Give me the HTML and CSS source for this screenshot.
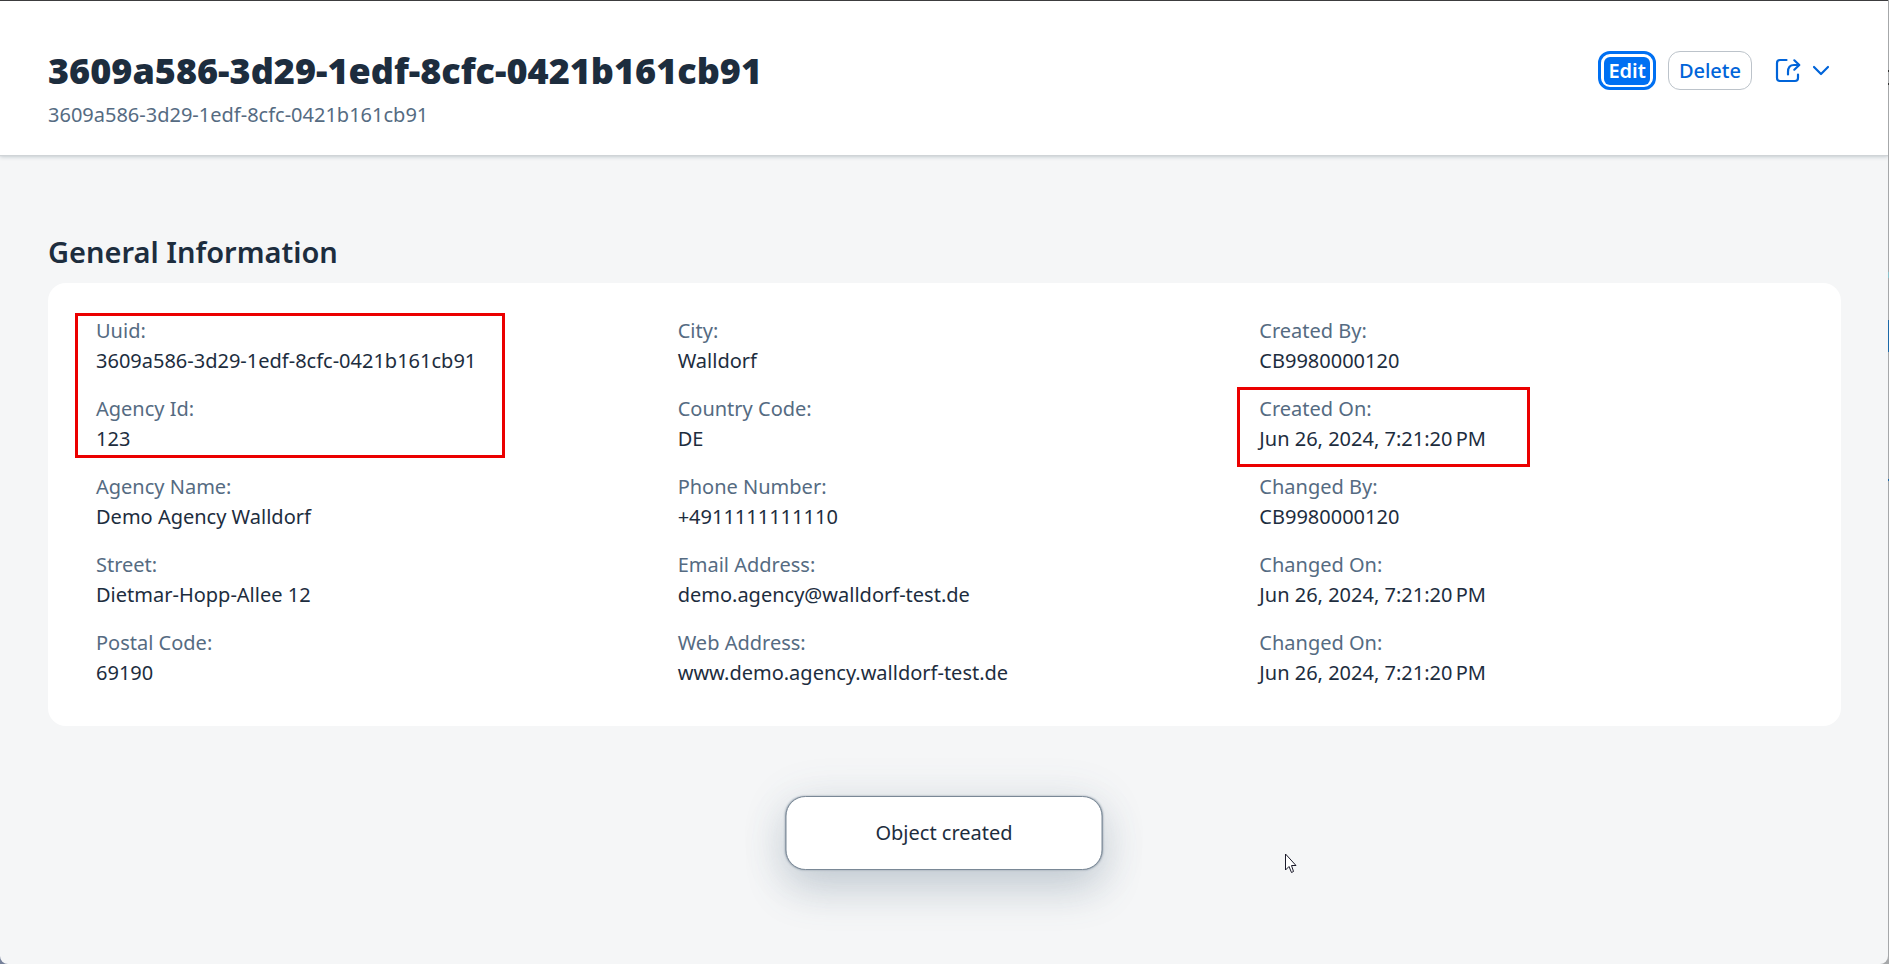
FILE: index.html
```html
<!DOCTYPE html>
<html lang="en">
<head>
<meta charset="utf-8">
<title>Agency</title>
<link rel="stylesheet" href="styles.css">
</head>
<body>
<div class="window">
  <header class="header">
    <div class="heading">
      <h1 class="title">3609a586-3d29-1edf-8cfc-0421b161cb91</h1>
      <p class="subtitle">3609a586-3d29-1edf-8cfc-0421b161cb91</p>
    </div>
    <div class="actions">
      <button class="button button-edit" type="button"><span>Edit</span></button>
      <button class="button button-delete" type="button">Delete</button>
      <button class="button button-share" type="button" aria-label="Share">
        <svg width="26" height="26" viewBox="0 0 26 26" fill="none" stroke="currentColor" stroke-width="2.200" stroke-linecap="round" stroke-linejoin="round"><path d="M11.500 2H5Q2 2 2 5V20Q2 23 5 23H20Q23 23 23 20V16.500"/><path d="M13 16.500V14Q13 7 19 7H24"/><path d="M19.300 2.300L24.300 7L19.300 11.700"/></svg>
        <svg width="18" height="12" viewBox="0 0 18 12" fill="none" stroke="currentColor" stroke-width="2.200" stroke-linecap="round" stroke-linejoin="round"><path d="M2 2L9 9L16 2"/></svg>
      </button>
    </div>
  </header>
  <main class="content">
    <h2 class="section-title">General Information</h2>
    <section class="card">
      <dl class="column">
        <div class="field"><dt>Uuid:</dt><dd>3609a586-3d29-1edf-8cfc-0421b161cb91</dd><span class="mark mark-id"></span></div>
        <div class="field"><dt>Agency Id:</dt><dd>123</dd></div>
        <div class="field"><dt>Agency Name:</dt><dd>Demo Agency Walldorf</dd></div>
        <div class="field"><dt>Street:</dt><dd>Dietmar-Hopp-Allee 12</dd></div>
        <div class="field"><dt>Postal Code:</dt><dd>69190</dd></div>
      </dl>
      <dl class="column">
        <div class="field"><dt>City:</dt><dd>Walldorf</dd></div>
        <div class="field"><dt>Country Code:</dt><dd>DE</dd></div>
        <div class="field"><dt>Phone Number:</dt><dd>+4911111111110</dd></div>
        <div class="field"><dt>Email Address:</dt><dd>demo.agency@walldorf-test.de</dd></div>
        <div class="field"><dt>Web Address:</dt><dd>www.demo.agency.walldorf-test.de</dd></div>
      </dl>
      <dl class="column">
        <div class="field"><dt>Created By:</dt><dd>CB9980000120</dd></div>
        <div class="field"><dt>Created On:</dt><dd>Jun 26, 2024, 7:21:20&#8239;PM</dd><span class="mark mark-date"></span></div>
        <div class="field"><dt>Changed By:</dt><dd>CB9980000120</dd></div>
        <div class="field"><dt>Changed On:</dt><dd>Jun 26, 2024, 7:21:20&#8239;PM</dd></div>
        <div class="field"><dt>Changed On:</dt><dd>Jun 26, 2024, 7:21:20&#8239;PM</dd></div>
      </dl>
    </section>
  </main>
  <div class="toast" role="status">Object created</div>
  <svg class="cursor" width="13" height="21" viewBox="0 0 13 21"><path d="M1.500 1V17L5 13.500L7.500 19.500L9.500 18.500L7.500 12.500H12Z" fill="#fff" stroke="#1a1a2a" stroke-width="1"/></svg>
</div>
</body>
</html>
```
FILE: styles.css
```css
* { box-sizing: border-box; }

body {
  margin: 0;
  min-height: 100vh;
  display: flex;
  background:
    linear-gradient(#333, #333) right 70px / 1px 2px no-repeat,
    linear-gradient(#333, #333) right 83px / 1px 2px no-repeat,
    linear-gradient(#8cc3cc, #8cc3cc) right 272px / 1px 6px no-repeat,
    linear-gradient(#1c69a8, #1c69a8) right 320px / 1px 32px no-repeat,
    linear-gradient(#1c69a8, #1c69a8) right 479px / 1px 2px no-repeat,
    linear-gradient(90deg, #76819a, #a6a8aa);
  background-color: #a6a8aa;
  font-family: "Noto Sans", "Open Sans", sans-serif;
  font-size: 20px;
  line-height: 30px;
  color: #1d2d3e;
}

.window {
  position: relative;
  flex: 1;
  margin-right: 1px;
  border-top: 1px solid #3c3c3e;
  border-radius: 0 0 8px 8px;
  background: #f5f6f7;
  overflow: hidden;
}

.header {
  display: flex;
  justify-content: space-between;
  align-items: flex-start;
  padding: 46px 47px 24px 48px;
  background: #fff;
  box-shadow: 0 1px 1px #d0d4d7, 0 2px 4px #c5cbd0;
}

.title {
  margin: 0;
  font-size: 36px;
  font-weight: 900;
  line-height: 48px;
}

.subtitle {
  margin: 5px 0 0;
  padding-bottom: 1px;
  color: #556b82;
}

.actions {
  display: flex;
  align-items: center;
  gap: 12px;
  padding-top: 4px;
}

.button {
  height: 39px;
  padding: 0;
  border-radius: 12px;
  background: #fff;
  color: #0064d9;
  font: inherit;
  line-height: 28px;
}

.button-edit {
  padding: 3px;
  border: 3px solid #0070f2;
}

.button-edit span {
  display: block;
  height: 28px;
  margin: -1px 0;
  padding: 0 4px;
  border-radius: 6px;
  background: #0070f2;
  color: #fff;
  font-weight: 600;
}

.button-delete {
  padding: 0 10px;
  border: 1px solid #bcc3ca;
  font-weight: 500;
}

.button-share {
  display: flex;
  align-items: center;
  gap: 11px;
  padding: 0 11px;
  border: 0;
}

.content { padding: 77px 47px 0 48px; }

.section-title {
  margin: 0;
  font-size: 29px;
  font-weight: 600;
  line-height: 40px;
}

.card {
  display: grid;
  grid-template-columns: repeat(3, 1fr);
  gap: 48px;
  margin-top: 11px;
  padding: 33px 48px 38px;
  border-radius: 18px;
  background: #fff;
}

.column {
  display: flex;
  flex-direction: column;
  gap: 18px;
  margin: 0;
}

.field { position: relative; }
dt { color: #556b82; }
dd { margin: 0; }

.mark {
  position: absolute;
  border: 3px solid #eb0000;
}

.mark-id {
  top: -3px;
  left: -21px;
  width: 430px;
  height: 145px;
}

.mark-date {
  top: -7px;
  left: -22px;
  width: 293px;
  height: 80px;
}

.toast {
  position: absolute;
  bottom: 94px;
  left: 50%;
  width: 317px;
  padding: 21px 20px;
  transform: translateX(-50%);
  border: 1px solid #7a8896;
  border-radius: 20px;
  background: #fff;
  box-shadow: 0 0 2px #8896a4, 0 20px 40px rgba(85, 107, 130, 0.24), 0 4px 48px rgba(85, 107, 130, 0.12);
  text-align: center;
}

.cursor {
  position: absolute;
  top: 852px;
  left: 1284px;
}
```
